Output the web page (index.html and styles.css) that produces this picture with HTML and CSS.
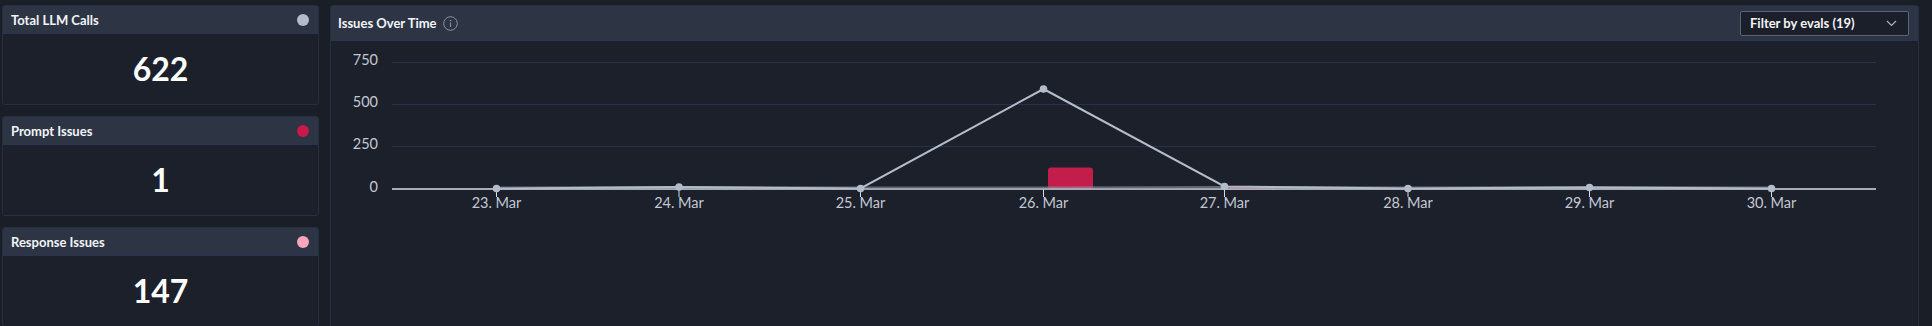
FILE: index.html
```html
<!DOCTYPE html>
<html>
<head>
<meta charset="utf-8">
<link rel="stylesheet" href="styles.css">
</head>
<body>
<div class="layout">
  <div class="stats">
    <div class="stat-card">
      <div class="stat-head"><span class="stat-title">Total LLM Calls</span><span class="dot dot-grey"></span></div>
      <div class="stat-body">622</div>
    </div>
    <div class="stat-card">
      <div class="stat-head"><span class="stat-title">Prompt Issues</span><span class="dot dot-red"></span></div>
      <div class="stat-body">1</div>
    </div>
    <div class="stat-card">
      <div class="stat-head"><span class="stat-title">Response Issues</span><span class="dot dot-pink"></span></div>
      <div class="stat-body">147</div>
    </div>
  </div>
  <div class="panel">
    <div class="panel-head">
      <div class="panel-title">
        <span>Issues Over Time</span>
        <svg class="info" width="15" height="15" viewBox="0 0 15 15">
          <circle cx="7.5" cy="7.5" r="6.8" fill="none" stroke="#8790a3" stroke-width="1"/>
          <circle cx="7.5" cy="4.6" r="0.8" fill="#8790a3"/>
          <line x1="7.5" y1="6.6" x2="7.5" y2="11" stroke="#8790a3" stroke-width="1.1"/>
        </svg>
      </div>
      <div class="select">
        <span>Filter by evals (19)</span>
        <svg width="11" height="7" viewBox="0 0 11 7"><polyline points="1,1 5.5,5.5 10,1" fill="none" stroke="#aab2c2" stroke-width="1.2"/></svg>
      </div>
    </div>
    <div class="panel-body">
      <svg class="chart" width="1587" height="290" viewBox="0 0 1587 290">
        <g transform="translate(-331,-41)">
          <g class="grid">
            <line x1="392" y1="62.5" x2="1876" y2="62.5"/>
            <line x1="392" y1="104.5" x2="1876" y2="104.5"/>
            <line x1="392" y1="146.5" x2="1876" y2="146.5"/>
          </g>
          <g class="ylab">
            <text x="378" y="65">750</text>
            <text x="378" y="107">500</text>
            <text x="378" y="149">250</text>
            <text x="378" y="192">0</text>
          </g>
          <rect x="1048" y="167.5" width="45" height="22" rx="3" fill="#c21d4b"/>
          <rect x="1229" y="186.5" width="46" height="3" fill="#c21d4b"/>
          <line class="base" x1="392" y1="189" x2="1876" y2="189"/>
          <g class="ticks">
            <line x1="496.5" y1="189" x2="496.5" y2="197"/>
            <line x1="679" y1="189" x2="679" y2="197"/>
            <line x1="860.5" y1="189" x2="860.5" y2="197"/>
            <line x1="1043.5" y1="189" x2="1043.5" y2="197"/>
            <line x1="1224.5" y1="189" x2="1224.5" y2="197"/>
            <line x1="1408" y1="189" x2="1408" y2="197"/>
            <line x1="1589.5" y1="189" x2="1589.5" y2="197"/>
            <line x1="1771.5" y1="189" x2="1771.5" y2="197"/>
          </g>
          <polyline class="band" points="496.5,188 679,187.5 860.5,188 1043.5,188 1224.5,187.5 1408,188 1589.5,187.5 1771.5,188"/>
          <polyline class="series" points="496.5,188.5 679,187 860.5,188.5 1043.5,89 1224.5,186.5 1408,188.5 1589.5,187.5 1771.5,188.5"/>
          <g class="marks">
            <circle cx="496.5" cy="188.5" r="3.8"/>
            <circle cx="679" cy="187" r="3.8"/>
            <circle cx="860.5" cy="188.5" r="3.8"/>
            <circle cx="1043.5" cy="89" r="3.8"/>
            <circle cx="1224.5" cy="186.5" r="3.8"/>
            <circle cx="1408" cy="188.5" r="3.8"/>
            <circle cx="1589.5" cy="187.5" r="3.8"/>
            <circle cx="1771.5" cy="188.5" r="3.8"/>
          </g>
          <g class="xlab">
            <text x="496.5" y="208">23. Mar</text>
            <text x="679" y="208">24. Mar</text>
            <text x="860.5" y="208">25. Mar</text>
            <text x="1043.5" y="208">26. Mar</text>
            <text x="1224.5" y="208">27. Mar</text>
            <text x="1408" y="208">28. Mar</text>
            <text x="1589.5" y="208">29. Mar</text>
            <text x="1771.5" y="208">30. Mar</text>
          </g>
        </g>
      </svg>
    </div>
  </div>
</div>
</body>
</html>
```

FILE: styles.css
```css
html, body {
  margin: 0;
  padding: 0;
  background: #1a1e27;
  overflow: hidden;
}

body {
  font-family: "Lato", "Noto Sans", sans-serif;
  color: #ffffff;
}

.layout {
  display: flex;
  gap: 11px;
  padding: 5px 13px 0 2px;
}

.stats {
  width: 317px;
  flex: none;
  display: flex;
  flex-direction: column;
  gap: 11px;
}

.stat-card {
  height: 100px;
  box-sizing: border-box;
  border: 1px solid #262e42;
  border-radius: 3px;
  background: #1c202b;
  display: flex;
  flex-direction: column;
  overflow: hidden;
}

.stat-head {
  height: 27px;
  flex: none;
  background: #2d3545;
  border-bottom: 1px solid #2b3450;
  display: flex;
  align-items: center;
  justify-content: space-between;
  padding: 0 9px 0 8px;
}

.stat-title {
  font-size: 13px;
  font-weight: 700;
  color: #f2f4f8;
}

.dot {
  width: 12px;
  height: 12px;
  border-radius: 50%;
}

.dot-grey { background: #b4bccb; }
.dot-red { background: #c9184a; }
.dot-pink { background: #f7a6bd; }

.stat-body {
  flex: 1;
  display: flex;
  align-items: center;
  justify-content: center;
  font-size: 32px;
  font-weight: 700;
  color: #ffffff;
  padding-bottom: 1px;
}

.panel {
  flex: 1;
  height: 340px;
  box-sizing: border-box;
  border: 1px solid #262e42;
  border-radius: 3px;
  background: #1c202b;
  display: flex;
  flex-direction: column;
  overflow: hidden;
}

.panel-head {
  height: 34px;
  flex: none;
  background: #2d3545;
  border-bottom: 1px solid #2b3450;
  display: flex;
  align-items: center;
  justify-content: space-between;
  padding: 0 9px 0 7px;
}

.panel-title {
  display: flex;
  align-items: center;
  gap: 6px;
  font-size: 13px;
  font-weight: 700;
  color: #f2f4f8;
}

.info {
  display: block;
}

.select {
  width: 169px;
  height: 25px;
  box-sizing: border-box;
  border: 1px solid #5a6479;
  border-radius: 2px;
  background: #1b1f2a;
  display: flex;
  align-items: center;
  justify-content: space-between;
  padding: 0 11px 0 9px;
  font-size: 13px;
  font-weight: 700;
  color: #f2f4f8;
}

.select svg {
  display: block;
}

.panel-body {
  flex: 1;
}

.chart {
  display: block;
}

.grid line {
  stroke: #28304a;
  stroke-width: 1;
}

.base {
  stroke: #d6dbe5;
  stroke-width: 1.5;
}

.ticks line {
  stroke: #d6dbe5;
  stroke-width: 1;
}

.band {
  fill: none;
  stroke: #8e97a8;
  stroke-width: 3;
  opacity: 0.6;
}

.series {
  fill: none;
  stroke: #b3bccb;
  stroke-width: 2;
}

.marks circle {
  fill: #b3bccb;
}

.ylab text {
  font-family: "Lato", "Noto Sans", sans-serif;
  font-size: 14.5px;
  fill: #c3c8d3;
  text-anchor: end;
}

.xlab text {
  font-family: "Lato", "Noto Sans", sans-serif;
  font-size: 14.5px;
  fill: #c3c8d3;
  text-anchor: middle;
}
```
